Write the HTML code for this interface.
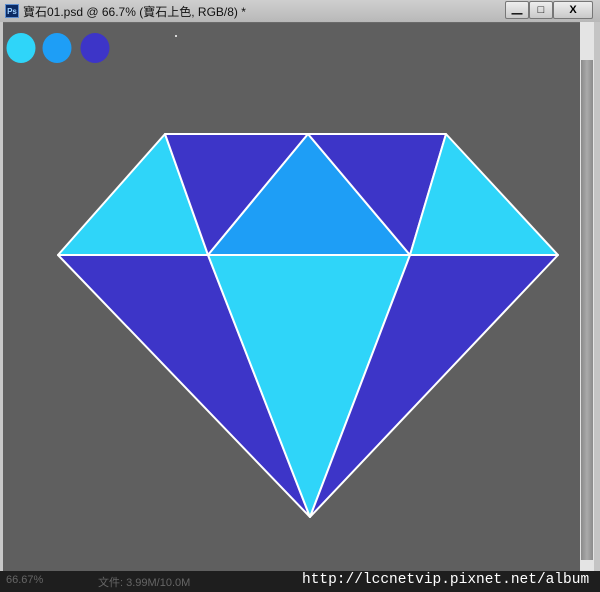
<!DOCTYPE html>
<html><head><meta charset="utf-8"><style>
body{margin:0;width:600px;height:592px;overflow:hidden;background:#5f5f5f;font-family:"Liberation Sans","Noto Sans CJK TC",sans-serif;position:relative}
.t{position:absolute;left:0;top:0;width:600px;height:22px;background:linear-gradient(#cfcfcf,#b8b8b8);border-bottom:1px solid #6a6a6a}
.ps{position:absolute;left:5px;top:4px;width:14px;height:14px;background:#0b2a63;border:1px solid #5f8fd0;color:#9fd0ff;font-size:8px;font-weight:bold;line-height:14px;text-align:center;box-sizing:border-box}
.tt{position:absolute;left:23px;top:3px;font-size:12px;color:#111}
.b{position:absolute;top:1px;height:16px;border:1px solid #777;border-radius:2px;background:linear-gradient(#eee,#c9c9c9);font-size:11px;text-align:center;line-height:16px;font-weight:bold}
.lf{position:absolute;left:0;top:22px;width:3px;height:550px;background:#c8c8c8}
.sb{position:absolute;left:580px;top:22px;width:14px;height:549px;background:#e4e4e4}
.th{position:absolute;left:581px;top:60px;width:12px;height:500px;background:linear-gradient(90deg,#8a8a8a,#aaa,#8a8a8a)}
.rf{position:absolute;left:594px;top:22px;width:6px;height:550px;background:#c4c4c4}
.bt{position:absolute;left:0;top:571px;width:600px;height:21px;background:#1e1e1e;color:#666;font-size:11px}
</style></head><body>
<div class="t"><div class="ps">Ps</div><div class="tt">寶石01.psd @ 66.7% (寶石上色, RGB/8) *</div>
<div class="b" style="left:505px;width:22px">▁</div><div class="b" style="left:529px;width:22px">□</div><div class="b" style="left:553px;width:38px">X</div></div>
<div class="lf"></div><div class="sb"></div><div class="th"></div><div class="rf"></div>
<svg style="position:absolute;left:0;top:0" width="580" height="571">
<ellipse cx="21" cy="48" rx="14.5" ry="15" fill="#2fd5f9"/><ellipse cx="57" cy="48" rx="14.5" ry="15" fill="#1e9ef6"/><ellipse cx="95" cy="48" rx="14.5" ry="15" fill="#3d35c8"/>
<circle cx="176" cy="36" r="1" fill="#fff"/>
<g stroke="#fff" stroke-width="2" stroke-linejoin="round">
<polygon points="165,134 58,255 208,255" fill="#2fd5f9"/>
<polygon points="165,134 308,134 208,255" fill="#3d35c8"/>
<polygon points="308,134 208,255 410,255" fill="#1e9ef6"/>
<polygon points="308,134 446,134 410,255" fill="#3d35c8"/>
<polygon points="446,134 410,255 558,255" fill="#2fd5f9"/>
<polygon points="58,255 208,255 310,517" fill="#3d35c8"/>
<polygon points="208,255 410,255 310,517" fill="#2fd5f9"/>
<polygon points="410,255 558,255 310,517" fill="#3d35c8"/>
</g></svg>
<div class="bt"><span style="position:absolute;left:6px;top:3px">66.67%</span><span style="position:absolute;left:98px;top:3px">文件: 3.99M/10.0M</span>
<span style="position:absolute;left:302px;top:1px;color:#fff;font-family:'Liberation Mono',monospace;font-size:14.5px">http://lccnetvip.pixnet.net/album</span></div>
</body></html>
